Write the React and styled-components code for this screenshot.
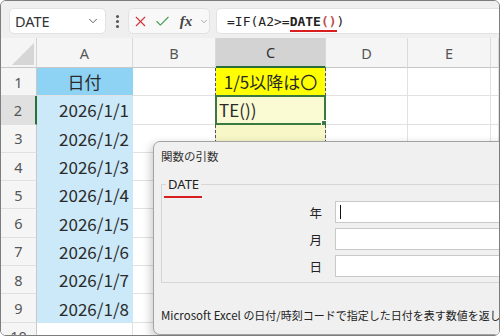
import React from 'react';
import styled, { createGlobalStyle } from 'styled-components';
import { ChevronDown, X, Check } from 'lucide-react';

const GlobalStyle = createGlobalStyle`
  html, body {
    margin: 0;
    padding: 0;
    background: #fff;
  }
  body {
    font-family: "Noto Sans CJK JP", "Noto Sans", sans-serif;
  }
`;

const Frame = styled.div`
  position: relative;
  width: 500px;
  height: 336px;
  box-sizing: border-box;
  border: 1px solid #7d7d7d;
  border-radius: 6px;
  overflow: hidden;
  background: #fff;
`;

// ---- formula toolbar ----
const Toolbar = styled.div`
  display: flex;
  align-items: center;
  height: 37px;
  box-sizing: border-box;
  padding: 3px 0 0 8px;
  background: #efefef;
`;

const NameBox = styled.div`
  width: 97px;
  height: 26px;
  box-sizing: border-box;
  display: flex;
  align-items: center;
  justify-content: space-between;
  padding: 0 5px 0 5px;
  background: #fff;
  border: 1px solid #e2e2e2;
  border-radius: 5px;
  font-family: "Noto Sans", sans-serif;
  font-size: 14.5px;
  color: #333;
`;

const Dots = styled.div`
  width: 22px;
  display: flex;
  flex-direction: column;
  align-items: center;
  gap: 2px;

  span {
    width: 3px;
    height: 3px;
    border-radius: 50%;
    background: #555;
  }
`;

const ActionGroup = styled.div`
  width: 82px;
  height: 26px;
  box-sizing: border-box;
  display: flex;
  align-items: center;
  background: #f8f8f8;
  border: 1px solid #e2e2e2;
  border-radius: 5px;
`;

const ActionButton = styled.div`
  width: ${p => p.$w || 22}px;
  display: flex;
  align-items: center;
  justify-content: center;
  color: ${p => p.$color || '#555'};
`;

const Fx = styled.span`
  font-family: "Liberation Serif", serif;
  font-style: italic;
  font-weight: bold;
  font-size: 15px;
  color: #444;
`;

const FormulaBar = styled.div`
  flex: 1;
  margin-left: 6px;
  height: 26px;
  box-sizing: border-box;
  display: flex;
  align-items: center;
  padding-left: 10px;
  background: #fff;
  border: 1px solid #e2e2e2;
  border-right: none;
  border-radius: 5px 0 0 5px;
  font-family: "DejaVu Sans Mono", monospace;
  font-size: 13px;
  color: #222;
  white-space: pre;
`;

const Marked = styled.span`
  border-bottom: 2px solid #d81e1e;
  padding-bottom: 1px;
  margin-bottom: -4px;
`;

const Paren = styled.span`
  color: #c0504d;
  font-weight: bold;
`;

// ---- sheet ----
const Sheet = styled.div`
  display: grid;
  grid-template-columns: 36px 96px 83px 110px 82px 83px 1fr;
  grid-template-rows: 30px;
  grid-auto-rows: 28.3px;
  background: #fff;
`;

const Corner = styled.div`
  background: #f5f5f5;
  border-right: 1px solid #d4d4d4;
  border-bottom: 1px solid #c8c8c8;
  display: flex;
  align-items: flex-end;
  justify-content: flex-end;
  padding: 0 2px 2px 0;
`;

const HeaderCell = styled.div`
  display: flex;
  align-items: center;
  justify-content: center;
  box-sizing: border-box;
  background: ${p => (p.$selected ? '#d3d3d3' : '#f5f5f5')};
  border-right: 1px solid #dadada;
  border-bottom: ${p => (p.$selected ? '2px solid #2c6e37' : '1px solid #c8c8c8')};
  font-family: "Noto Sans", sans-serif;
  font-size: 14.5px;
  color: ${p => (p.$selected ? '#333' : '#555')};
`;

const RowHead = styled.div`
  display: flex;
  align-items: center;
  justify-content: center;
  box-sizing: border-box;
  background: ${p => (p.$active ? '#e0e0e0' : '#f5f5f5')};
  border-right: ${p => (p.$active ? '2px solid #2c6e37' : '1px solid #c8c8c8')};
  border-bottom: 1px solid #e0e0e0;
  font-family: "Noto Sans", sans-serif;
  font-size: 14.5px;
  color: #555;
`;

const cellBg = {
  title: '#8fd3f4',
  date: '#cbe9f8',
  yellow: '#ffff00',
  active: '#fbfbd3',
  pale: '#f8f7c8',
};

const Cell = styled.div`
  position: relative;
  display: flex;
  align-items: center;
  justify-content: ${p => p.$align || 'flex-start'};
  box-sizing: border-box;
  padding: 0 3px;
  background: ${p => cellBg[p.$variant] || '#fff'};
  border-right: 1px solid ${p => (p.$variant === 'title' || p.$variant === 'date' ? 'transparent' : '#e1e1e1')};
  border-bottom: 1px solid ${p => (p.$variant === 'date' ? 'transparent' : '#e1e1e1')};
  font-size: 17px;
  color: #2a2a2a;
  white-space: nowrap;
  overflow: visible;

  ${p => p.$ants && `
    &::after {
      content: '';
      position: absolute;
      top: 0;
      bottom: -1px;
      left: -1px;
      right: -1px;
      border-left: 1px dashed #555;
      border-right: 1px dashed #555;
      pointer-events: none;
    }
  `}
`;

const ActiveBorder = styled.div`
  position: absolute;
  inset: -1px -1px -1px -1px;
  border: 2px solid #3a7a40;
  pointer-events: none;

  &::after {
    content: '';
    position: absolute;
    right: -4px;
    bottom: -4px;
    width: 5px;
    height: 5px;
    background: #3a7a40;
    border: 1px solid #fff;
  }
`;

// ---- dialog ----
const Dialog = styled.div`
  position: absolute;
  left: 152px;
  top: 140px;
  width: 380px;
  height: 194px;
  box-sizing: border-box;
  padding: 0 0 0 7px;
  display: flex;
  flex-direction: column;
  background: #f0f0f0;
  border: 1px solid #a3a3a3;
  border-radius: 7px;
  box-shadow: -2px 3px 10px rgba(0, 0, 0, 0.22);
`;

const DialogTitle = styled.div`
  padding-top: 5px;
  line-height: 18px;
  font-size: 11.5px;
  color: #333;
`;

const Group = styled.fieldset`
  margin: 11px 0 0 0;
  padding: 0 0 5px 4px;
  border: 1px solid #d6d6d6;
  border-right: none;
`;

const Legend = styled.legend`
  position: relative;
  padding: 0 2px;
  line-height: 16px;
  font-family: "Noto Sans", sans-serif;
  font-size: 13px;
  color: #222;

  &::after {
    content: '';
    position: absolute;
    left: -2px;
    top: 20px;
    width: 38px;
    height: 2px;
    background: #d81e1e;
  }
`;

const ArgGrid = styled.div`
  display: grid;
  grid-template-columns: 156px 1fr;
  grid-auto-rows: 22px;
  column-gap: 13px;
  row-gap: 5px;
  padding-top: 9px;
`;

const ArgLabel = styled.div`
  display: flex;
  align-items: center;
  justify-content: flex-end;
  font-size: 12.5px;
  color: #222;
`;

const ArgInput = styled.div`
  display: flex;
  align-items: center;
  padding-left: 4px;
  background: #fff;
  border: 1px solid #c9c9c9;
  border-right: none;
`;

const Caret = styled.span`
  width: 1px;
  height: 14px;
  background: #111;
`;

const Description = styled.div`
  margin-top: 23px;
  line-height: 18px;
  font-size: 11.5px;
  color: #222;
  white-space: nowrap;

  span {
    font-size: 11px;
  }
`;

const columns = ['A', 'B', 'C', 'D', 'E', ''];
const dates = ['2026/1/1', '2026/1/2', '2026/1/3', '2026/1/4', '2026/1/5', '2026/1/6', '2026/1/7', '2026/1/8'];

const App = () => {
  const rows = [];

  // row 1
  rows.push(
    <React.Fragment key="r1">
      <RowHead>1</RowHead>
      <Cell $variant="title" $align="center">日付</Cell>
      <Cell />
      <Cell $variant="yellow" $align="center" $ants>1/5以降は〇</Cell>
      <Cell />
      <Cell />
      <Cell />
    </React.Fragment>
  );

  dates.forEach((d, i) => {
    const n = i + 2;
    const isActive = n === 2;
    rows.push(
      <React.Fragment key={d}>
        <RowHead $active={isActive}>{n}</RowHead>
        <Cell $variant="date" $align="flex-end">{d}</Cell>
        <Cell />
        {isActive ? (
          <Cell $variant="active">
            TE())
            <ActiveBorder />
          </Cell>
        ) : (
          <Cell $variant="pale" $ants />
        )}
        <Cell />
        <Cell />
        <Cell />
      </React.Fragment>
    );
  });

  rows.push(
    <React.Fragment key="r10">
      <RowHead>10</RowHead>
      <Cell />
      <Cell />
      <Cell $variant="pale" $ants />
      <Cell />
      <Cell />
      <Cell />
    </React.Fragment>
  );

  return (
    <>
      <GlobalStyle />
      <Frame>
        <Toolbar>
          <NameBox>
            DATE
            <ChevronDown size={14} strokeWidth={1.6} color="#555" />
          </NameBox>
          <Dots>
            <span />
            <span />
            <span />
          </Dots>
          <ActionGroup>
            <ActionButton $color="#d13438">
              <X size={17} strokeWidth={1.5} />
            </ActionButton>
            <ActionButton $color="#3f9c4f">
              <Check size={17} strokeWidth={1.5} />
            </ActionButton>
            <ActionButton $w={26}>
              <Fx>fx</Fx>
            </ActionButton>
            <ActionButton $w={10} $color="#777">
              <ChevronDown size={11} strokeWidth={1.5} />
            </ActionButton>
          </ActionGroup>
          <FormulaBar>
            =IF(A2&gt;=<Marked><b>DATE</b><Paren>()</Paren></Marked>)
          </FormulaBar>
        </Toolbar>

        <Sheet>
          <Corner>
            <svg width="22" height="22" viewBox="0 0 22 22">
              <polygon points="22,0 22,22 0,22" fill="#d6d6d6" />
            </svg>
          </Corner>
          {columns.map((c, i) => (
            <HeaderCell key={i} $selected={c === 'C'}>{c}</HeaderCell>
          ))}
          {rows}
        </Sheet>

        <Dialog>
          <DialogTitle>関数の引数</DialogTitle>
          <Group>
            <Legend>DATE</Legend>
            <ArgGrid>
              <ArgLabel>年</ArgLabel>
              <ArgInput><Caret /></ArgInput>
              <ArgLabel>月</ArgLabel>
              <ArgInput />
              <ArgLabel>日</ArgLabel>
              <ArgInput />
            </ArgGrid>
          </Group>
          <Description>
            Microsoft Excel <span>の日付/時刻コードで指定した日付を表す数値を返します。</span>
          </Description>
        </Dialog>
      </Frame>
    </>
  );
};

export default App;
